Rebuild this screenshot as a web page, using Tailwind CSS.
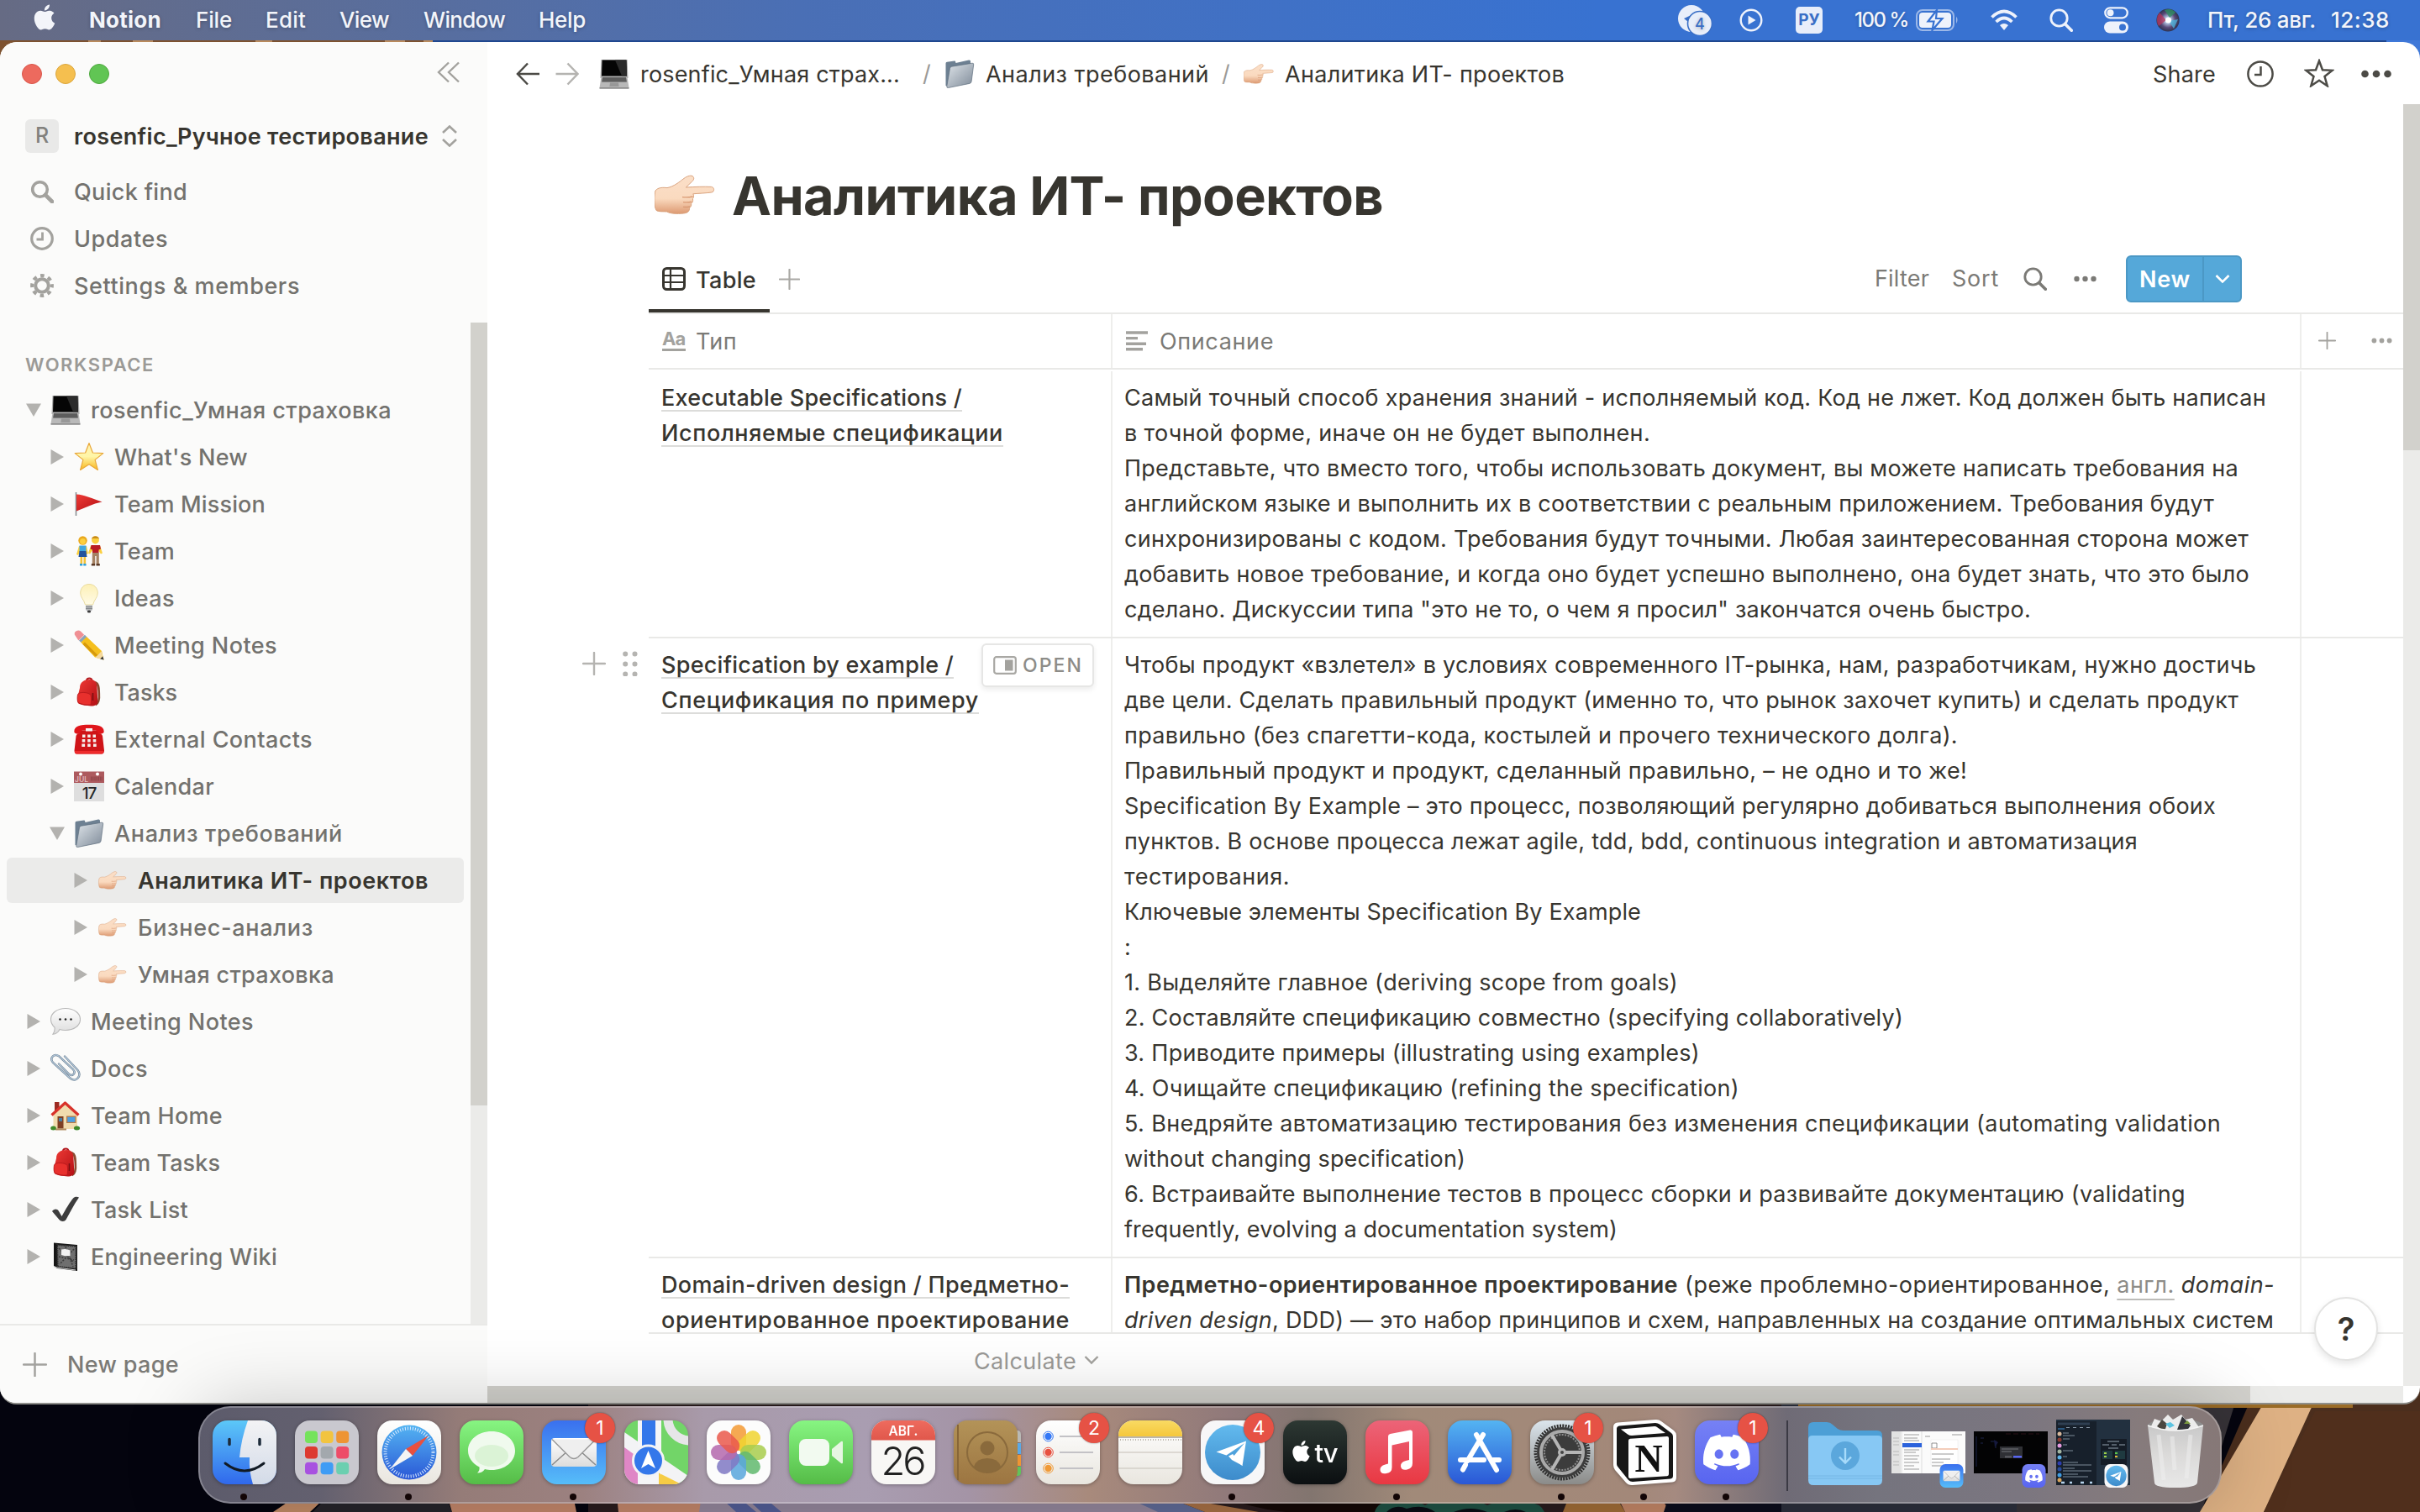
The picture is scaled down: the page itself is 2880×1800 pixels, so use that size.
<!DOCTYPE html>
<html lang="ru">
<head>
<meta charset="utf-8">
<title>Аналитика ИТ- проектов</title>
<script src="https://cdn.jsdelivr.net/npm/@tailwindcss/browser@4"></script>
</head>
<body class="font-['Inter','Noto_Sans',sans-serif] text-[27px] text-[#37352f] antialiased">

<svg width="0" height="0" class="absolute">
  <defs>
    <linearGradient id="g-hand" x1="0" y1="0" x2="0" y2="1"><stop offset="0" stop-color="#fbdfc8"/><stop offset=".6" stop-color="#fadabf"/><stop offset="1" stop-color="#dd9a72"/></linearGradient>
    <linearGradient id="g-star" x1="0" y1="0" x2="0" y2="1"><stop offset="0" stop-color="#fff3b0"/><stop offset=".5" stop-color="#fff6a8"/><stop offset="1" stop-color="#f9b71c"/></linearGradient>
    <linearGradient id="g-fold" x1="0" y1="0" x2="1" y2="1"><stop offset="0" stop-color="#dfe5ea"/><stop offset="1" stop-color="#7e8a98"/></linearGradient>
    <linearGradient id="g-red" x1="0" y1="0" x2="1" y2="1"><stop offset="0" stop-color="#ef3b36"/><stop offset="1" stop-color="#b30f14"/></linearGradient>
    <linearGradient id="g-bulb" x1="0" y1="0" x2="0" y2="1"><stop offset="0" stop-color="#fdf0b6"/><stop offset="1" stop-color="#fffbe6"/></linearGradient>
    <linearGradient id="g-white" x1="0" y1="0" x2="0" y2="1"><stop offset="0" stop-color="#ffffff"/><stop offset="1" stop-color="#dcdcdc"/></linearGradient>
    <linearGradient id="g-finder" x1="0" y1="0" x2="0" y2="1"><stop offset="0" stop-color="#5cc8f8"/><stop offset="1" stop-color="#3068ec"/></linearGradient>
    <linearGradient id="g-face" x1="0" y1="0" x2="0" y2="1"><stop offset="0" stop-color="#f3f3f5"/><stop offset="1" stop-color="#d3dbe8"/></linearGradient>
    <linearGradient id="g-green" x1="0" y1="0" x2="0" y2="1"><stop offset="0" stop-color="#87f582"/><stop offset="1" stop-color="#55bc47"/></linearGradient>
    <linearGradient id="g-mail" x1="0" y1="0" x2="0" y2="1"><stop offset="0" stop-color="#3a70ee"/><stop offset="1" stop-color="#56bdf9"/></linearGradient>
    <linearGradient id="g-blue" x1="0" y1="0" x2="0" y2="1"><stop offset="0" stop-color="#54b4f2"/><stop offset="1" stop-color="#2a57d6"/></linearGradient>
    <linearGradient id="g-tg" x1="0" y1="0" x2="0" y2="1"><stop offset="0" stop-color="#62baee"/><stop offset="1" stop-color="#3d8bcb"/></linearGradient>
    <linearGradient id="g-music" x1="0" y1="0" x2="0" y2="1"><stop offset="0" stop-color="#ec6478"/><stop offset="1" stop-color="#e93842"/></linearGradient>
    <linearGradient id="g-tv" x1="0" y1="0" x2="0" y2="1"><stop offset="0" stop-color="#2d3833"/><stop offset="1" stop-color="#0b0f11"/></linearGradient>
    <linearGradient id="g-set" x1="0" y1="0" x2="0" y2="1"><stop offset="0" stop-color="#dbe5ec"/><stop offset="1" stop-color="#8b8b89"/></linearGradient>
    <linearGradient id="g-disc" x1="0" y1="0" x2="0" y2="1"><stop offset="0" stop-color="#7681f5"/><stop offset="1" stop-color="#5865f0"/></linearGradient>
    <linearGradient id="g-book" x1="0" y1="0" x2="0" y2="1"><stop offset="0" stop-color="#b39358"/><stop offset="1" stop-color="#9c7541"/></linearGradient>
    <linearGradient id="g-note" x1="0" y1="0" x2="0" y2="1"><stop offset="0" stop-color="#f9da63"/><stop offset="1" stop-color="#f5c73b"/></linearGradient>
    <linearGradient id="g-paper" x1="0" y1="0" x2="0" y2="1"><stop offset="0" stop-color="#ffffff"/><stop offset="1" stop-color="#e9e6df"/></linearGradient>
    <linearGradient id="g-cal" x1="0" y1="0" x2="0" y2="1"><stop offset="0" stop-color="#ee6b5e"/><stop offset="1" stop-color="#e0574b"/></linearGradient>
    <linearGradient id="g-can" x1="0" y1="0" x2="0" y2="1"><stop offset="0" stop-color="#c9c9c9"/><stop offset=".5" stop-color="#dcdbda"/><stop offset="1" stop-color="#e8e8e8"/></linearGradient>
    <radialGradient id="g-siri"><stop offset="0" stop-color="#ffffff"/><stop offset=".3" stop-color="#a9b8d8"/><stop offset=".65" stop-color="#5a4a78"/><stop offset="1" stop-color="#2d3350"/></radialGradient>
    <clipPath id="c-app"><rect width="76" height="76" rx="18"/></clipPath>
  </defs>

  <symbol id="laptop" viewBox="0 0 36 36"><path d="M2.500 1h31l1 22h-33z" fill="#a9a9a9"/><path d="M3.600 1.500h28.800L33 20.500H3z" fill="#050505"/><path d="M19 1.500h13.400L33 20.500H27z" fill="#2b2b2b"/><path d="M2.500 21.500h31L35.500 34.500h-35z" fill="#b9b9b9"/><path d="M4 22.200h28l.8 5.300H3.200z" fill="#4a4a4a"/><path d="M4 24h28M3.600 26h28.800" stroke="#8a8a8a" stroke-width=".6"/><path d="M13 28.500h10l.6 4.500H12.400z" fill="#989898"/><path d="M.5 34h35v1.800H.5z" fill="#8c8c8c"/></symbol>
  <symbol id="star" viewBox="0 0 36 36"><path d="M18 1.500l4.400 11.500 12.400.600-9.700 7.800 3.300 12L18 26.700 7.600 33.400l3.300-12L1.200 13.600 13.600 13z" fill="url(#g-star)" stroke="#e9a83a" stroke-width="1.200" stroke-linejoin="round"/></symbol>
  <symbol id="flag" viewBox="0 0 36 36"><path d="M2.500 4v28" stroke="#8a8f94" stroke-width="1.600"/><path d="M3 6.500C12 6.500 22 12 33.500 15.500 22 17.500 13 23 3 26.500z" fill="url(#g-red)"/></symbol>
  <symbol id="couple" viewBox="0 0 36 36"><circle cx="10.500" cy="5.500" r="5.200" fill="#e9a91e"/><circle cx="10.500" cy="6.500" r="3.400" fill="#fbcf3f"/><path d="M6 12h9l2 9-2 1-2-3v-2H8l-3 6-2-1z" fill="#fbcf3f"/><path d="M6.500 11.500h8v7h-8z" fill="#3fa6e0"/><path d="M6.500 18h8l1 7h-10z" fill="#24549c"/><path d="M7.500 25h2.600v8H7.500zM11.500 25h2.600v8h-2.600z" fill="#f5c33a"/><path d="M7 33h3.200v2.500H7zM11.300 33h3.200v2.500h-3.200z" fill="#2ea0dc"/><circle cx="25.500" cy="5" r="4.400" fill="#fbcf3f"/><path d="M21 4c0-5 9-5 9 0l-1-1h-7z" fill="#c98c17"/><path d="M20 11.500h11l3 9-2 1-3-4v2h-7v-2l-3 4-2-1z" fill="#fbcf3f"/><path d="M20.500 11h10.500l1 4.500-2.500 1v4h-7.500v-4l-2.500-1z" fill="#b91c25"/><path d="M21.800 20h8v13.500h-3.200V24h-1.400v9.500h-3.400z" fill="#a58263"/><path d="M20.800 33h4.300v2.500h-4.300zM26.500 33h4.300v2.500h-4.300z" fill="#5c3a26"/></symbol>
  <symbol id="bulb" viewBox="0 0 36 36"><path d="M18 1.500c6.300 0 10.300 4.700 10.300 10.500 0 5.500-4.200 7.500-5.800 14h-9C11.900 19.500 7.700 17.500 7.700 12 7.700 6.200 11.700 1.500 18 1.500z" fill="url(#g-bulb)" stroke="#eadca0" stroke-width="1"/><path d="M14 26.500h8v5.500l-2 1.500h-4l-2-1.500z" fill="#b6b8ba"/><path d="M14 28.500h8M14 30.500h8" stroke="#7e8286" stroke-width=".9"/><ellipse cx="18" cy="34" rx="2.200" ry="1.500" fill="#3c3c3c"/></symbol>
  <symbol id="pencil" viewBox="0 0 36 36"><path d="M.8 5.500Q0 2 4 .8q2-.8 4 .8l4.200 4.200-6.800 6.800z" fill="#f09094"/><path d="M6 12.500l6.800-6.800 2.600 2.600-6.800 6.800z" fill="#8ba3b7"/><path d="M8.300 14.800l6.800-6.800L33 25l2.500 10.500L25 32.500z" fill="#f5bf1d"/><path d="M10.500 17l2.400-2.400 17.600 17.500-5.500-1z" fill="#d79a0c"/><path d="M32.700 25.200l2.800 10.300-10.200-2.800q4-3.500 7.400-7.500z" fill="#f4d9a0"/><path d="M34.300 31.300l1.300 4.300-4.400-1.200z" fill="#3a3a3a"/></symbol>
  <symbol id="bag" viewBox="0 0 36 36"><path d="M25 6c5 2 4.500 8 4.800 13 .5 6 .5 12-4 14" fill="none" stroke="#8b4a30" stroke-width="2.600"/><path d="M15 4.500c0-4 7-4 6.500 0" fill="none" stroke="#b3161b" stroke-width="2"/><path d="M7 13C7 6 12 3 19 3c6 0 8 3 8.500 9l.8 17c0 4-3 5.500-8 5.500-6-.500-10-1-14-2.500-2.500-1-2.300-4-2-8z" fill="url(#g-red)"/><path d="M4.500 21c1-4 13.500-3 15.500.500 1 3 .5 8 0 11.500-6 .500-10-.500-14-2-2.500-1.500-2-7-1.500-10z" fill="#e8302d" stroke="#b3161b" stroke-width=".8"/><path d="M22.500 19v9" stroke="#7c1012" stroke-width="1.600"/></symbol>
  <symbol id="phone" viewBox="0 0 36 36"><path d="M.3 9C.3 2 8 .8 18 .8S35.700 2 35.700 9c0 3.500-9 3.500-9.200 0v-1.500h-17V9c-.2 3.500-9.200 3.500-9.200 0z" fill="#e0161b"/><path d="M9 7.500h18l2 3.500q4 0 5 3l2 17.500q0 4-3 4H3.500q-3 0-3-4L2.500 14q1-3 4.500-3z" fill="#cf1418"/><path d="M14 5h8v3.500h-8z" fill="#f6f6f6"/><path d="M1 32h34v1.500Q35 35.500 33 35.500H3Q1 35.500 1 33.500z" fill="#ee2b2c"/><path d="M10 12.500h3.500v3.500H10zM16.200 12.500h3.500v3.500h-3.500zM22.500 12.500H26v3.500h-3.500zM9.700 18h3.600v3.500H9.700zM16.200 18h3.500v3.500h-3.500zM22.700 18h3.600v3.500h-3.600zM9.300 23.500h3.800V27H9.300zM16.200 23.500h3.500V27h-3.500zM23 23.500h3.700V27H23z" fill="#f5f0ee"/></symbol>
  <symbol id="cal" viewBox="0 0 36 36"><path d="M0 .500h36V14H0z" fill="#ad5a5e"/><path d="M0 14h36v22H0z" fill="#dedede"/><circle cx="8" cy="3.500" r="2" fill="#fff"/><circle cx="28" cy="3.500" r="2" fill="#fff"/><path d="M20 9h14" stroke="#8f4448" stroke-width="5" stroke-dasharray="1 .8"/><text x="1" y="12.500" font-size="8.500" fill="#e7c6c6" font-family="Inter">JUL</text><text x="18" y="32.500" font-size="19" text-anchor="middle" fill="#262626" letter-spacing="-1" font-family="Inter">17</text></symbol>
  <symbol id="folder" viewBox="0 0 36 36"><path d="M1.500 5.500q0-1.500 1.500-1.700l9-1.200q1 0 1.200 1.200l.3 1.200L29 1.500q2-.300 2 1.500v4l-26 26-3.500-1z" fill="#6d8092"/><path d="M6.500 11.500q.2-2 2.200-2.300L33 5.200q2-.200 1.700 1.800l-2.600 20q-.2 2-2.200 2.400L4.500 34.500q-2 .300-1.700-1.800z" fill="url(#g-fold)" stroke="#5f6e7e" stroke-width=".7"/></symbol>
  <symbol id="hand" viewBox="0 0 36 24"><path d="M.5 9.500C2 7.500 5 7.500 7.500 7.800c4-.8 7-3.300 10-5.600 2-1.500 4.500-2.200 5.500-1 .9 1.200 0 2.300-1.500 3.600l-2.800 2.700c5-.3 11-.5 15-.3 2 .1 2.200 3 .2 3.300-3.500.5-8 .6-11 .9.600 1 .5 2-.2 2.900.3 1.200 0 2.200-.9 2.900.2 1.200-.2 2-1 2.500 0 2-1 3-3.500 3.300-4 .4-8 .2-10-1-2-.2-5 .2-6.300-.8C-.5 18.500-.2 12 .5 9.500z" fill="url(#g-hand)" stroke="#d9a27d" stroke-width=".5"/><path d="M16.500 13.300q3 .4 6.300-.3M17 16.300q2.500.400 5-.2M17 19.200q2 .2 4-.2" stroke="#d99a74" stroke-width=".7" fill="none"/></symbol>
  <symbol id="speech" viewBox="0 0 36 36"><path d="M18 2.500c10 0 17.500 5.500 17.500 13S28 28.500 18 28.500c-2.500 0-5-.3-7-1-1.500 3-4 5.500-8 5.700 1.500-2 2.400-4.700 2-8.200C2.200 22.500.5 19.500.5 15.500.5 8 8 2.500 18 2.500z" fill="url(#g-white)" stroke="#b9b9b9" stroke-width="1.100"/><circle cx="11.500" cy="15.500" r="1.300" fill="#222"/><circle cx="18" cy="15.500" r="1.300" fill="#222"/><circle cx="24.500" cy="15.500" r="1.300" fill="#222"/></symbol>
  <symbol id="clip" viewBox="0 0 36 36"><path d="M17 3.500l15.500 16.500c5 6.500-1.500 15-8.500 10L3 11C-1.500 5.500 4.500-.5 10 3.200l17 16c4 4.500-1 9-5 5.500L10 12.500" fill="none" stroke="#6f8496" stroke-width="2.400" stroke-linecap="round"/><path d="M17 3.500l15.500 16.500c5 6.500-1.500 15-8.500 10L3 11C-1.500 5.500 4.500-.5 10 3.200l17 16c4 4.500-1 9-5 5.500L10 12.500" fill="none" stroke="#b5c9db" stroke-width="1.100" stroke-linecap="round"/></symbol>
  <symbol id="house" viewBox="0 0 36 36"><path d="M5 2h5.500v10H5z" fill="#9c2b22"/><path d="M3.500 16L17.500 4.500 32 16v18H3.500z" fill="#f1dcae"/><path d="M1.500 17.500L17.500 3l16 14.500" fill="none" stroke="#d8322a" stroke-width="3.200" stroke-linejoin="round"/><path d="M8.500 19h7v14.500h-7z" fill="#7f4023"/><path d="M10 21h4v4h-4z" fill="#4a7ea3"/><path d="M19 18.500h11.500v8.500H19z" fill="#b97a45"/><path d="M20.300 19.800h9v6h-9z" fill="#4c9fe2"/><path d="M6 33.500h13v2H6z" fill="#b08a5e"/><ellipse cx="3.500" cy="33" rx="3.300" ry="2.500" fill="#3f8a2a"/><ellipse cx="31.500" cy="33" rx="3.600" ry="2.500" fill="#3f8a2a"/></symbol>
  <symbol id="check" viewBox="0 0 36 36"><path d="M2 20c2-3 6-3.500 8 0l3.500 6C18 18 23 9 27.500 4c2-2 5-1.500 6.500-.5C28 12 23 22 18.500 30c-1.500 2.500-6 2.500-8 0z" fill="#3d3d3d"/></symbol>
  <symbol id="wiki" viewBox="0 0 36 36"><path d="M4 1.500L32 4v31L8 32 4 29.500z" fill="#151515"/><path d="M8 4l22.500 1.500v27L8.500 30z" fill="#6f6f6f"/><path d="M8 4l22.500 1.500v27L8.500 30z" fill="none" stroke="#2a2a2a" stroke-width="2.200" stroke-dasharray="1.500 1"/><path d="M10 8l18 17M28 9L11 27M18 6l9 24M10 18l18 4" stroke="#3b3b3b" stroke-width="1.600" stroke-dasharray="2 1.500"/><path d="M13 9.500q6-1.500 10.500 1v6.500q-5 1-10.500-1z" fill="#f3f3f3"/><path d="M4 29.500l4 1.500 22 3" stroke="#ddd" stroke-width="1" fill="none"/></symbol>

  <symbol id="tri" viewBox="0 0 17 18"><path d="M1 0l15.500 9L1 18z" fill="#b3b2af"/></symbol>
  <symbol id="trid" viewBox="0 0 18 17"><path d="M0 1h18L9 16.500z" fill="#b3b2af"/></symbol>
  <symbol id="plus" viewBox="0 0 28 28"><path d="M14 1v26M1 14h26" stroke="currentColor" stroke-width="2.400" stroke-linecap="round"/></symbol>
  <symbol id="dots" viewBox="0 0 28 8"><circle cx="3.600" cy="4" r="3.300" fill="currentColor"/><circle cx="14" cy="4" r="3.300" fill="currentColor"/><circle cx="24.400" cy="4" r="3.300" fill="currentColor"/></symbol>
  <symbol id="mag" viewBox="0 0 28 28"><circle cx="11.500" cy="11.500" r="9.700" fill="none" stroke="currentColor" stroke-width="2.800"/><path d="M18.800 18.800L26.300 26.300" stroke="currentColor" stroke-width="3.600" stroke-linecap="round"/></symbol>
  <symbol id="apple" viewBox="0 0 24 24"><path fill="currentColor" d="M12.152 6.896c-.948 0-2.415-1.078-3.960-1.040-2.040.027-3.910 1.183-4.961 3.014-2.117 3.675-.546 9.103 1.519 12.090 1.013 1.454 2.208 3.090 3.792 3.039 1.520-.065 2.090-.987 3.935-.987 1.831 0 2.350.987 3.960.948 1.637-.026 2.676-1.480 3.676-2.948 1.156-1.688 1.636-3.325 1.662-3.415-.039-.013-3.182-1.221-3.220-4.857-.026-3.040 2.480-4.494 2.597-4.559-1.429-2.090-3.623-2.324-4.390-2.376-2-.156-3.675 1.090-4.610 1.090zM15.530 3.830c.843-1.012 1.400-2.427 1.245-3.830-1.207.052-2.662.805-3.532 1.818-.780.896-1.454 2.338-1.273 3.714 1.338.104 2.715-.688 3.559-1.701"/></symbol>

  <symbol id="a-mail" viewBox="0 0 76 76"><rect width="76" height="76" rx="18" fill="url(#g-mail)"/><rect x="11" y="21" width="54" height="34" rx="4" fill="url(#g-white)"/><path d="M12 53l19-17M64 53L45 36" stroke="#8a8a8a" stroke-width="1.500"/><path d="M12 22.500l21 21q5 4 10 0l21-21" fill="#efefef" stroke="#9a9a9a" stroke-width="1.500"/></symbol>
  <symbol id="a-discord" viewBox="0 0 76 76"><rect width="76" height="76" rx="18" fill="url(#g-disc)"/><path transform="translate(10 10) scale(2.330)" fill="#fff" d="M20.317 4.370a19.791 19.791 0 00-4.885-1.515.074.074 0 00-.079.037c-.211.375-.445.865-.608 1.250-1.845-.276-3.680-.276-5.487 0-.164-.393-.406-.874-.618-1.250a.077.077 0 00-.079-.037 19.736 19.736 0 00-4.885 1.515.070.070 0 00-.032.028C.533 9.046-.319 13.580.099 18.058a.082.082 0 00.031.056c2.053 1.508 4.041 2.423 5.993 3.029a.078.078 0 00.084-.028c.462-.630.873-1.295 1.226-1.994a.076.076 0 00-.042-.106c-.653-.248-1.274-.550-1.872-.892a.077.077 0 01-.008-.128c.126-.094.252-.192.372-.291a.074.074 0 01.078-.011c3.928 1.793 8.180 1.793 12.061 0a.074.074 0 01.079.010c.120.099.246.198.373.292a.077.077 0 01-.007.128 12.299 12.299 0 01-1.873.891.077.077 0 00-.041.107c.360.698.772 1.363 1.225 1.993a.076.076 0 00.084.029c1.961-.607 3.950-1.522 6.002-3.029a.077.077 0 00.031-.055c.500-5.177-.838-9.674-3.549-13.660a.061.061 0 00-.031-.029zM8.020 15.331c-1.183 0-2.157-1.086-2.157-2.419 0-1.333.956-2.419 2.157-2.419 1.211 0 2.176 1.095 2.157 2.419 0 1.333-.956 2.419-2.157 2.419zm7.975 0c-1.183 0-2.157-1.086-2.157-2.419 0-1.333.955-2.419 2.157-2.419 1.211 0 2.176 1.095 2.157 2.419 0 1.333-.946 2.419-2.157 2.419z"/></symbol>
  <symbol id="a-tg" viewBox="0 0 76 76"><rect width="76" height="76" rx="18" fill="#f7f7f8"/><circle cx="38" cy="38" r="33" fill="url(#g-tg)"/><path d="M18.500 37.500L54 24.500l-4.500 29.500-12-9.500L52 27 30.500 41.500z" fill="#fff"/><path d="M33 42.500l5-2.500 12 14-13-7z" fill="#fff"/></symbol>
</svg>

<div class="relative h-[1800px] w-[2880px] overflow-hidden bg-[#05050f]">

  <!-- desktop wallpaper -->
  <svg class="absolute inset-0" width="2880" height="1800" viewBox="0 0 2880 1800">
    <path d="M0 40h515v40H0z" fill="#7d5230"/><path d="M105 40h15v20h-15zM158 40h24v20h-24zM304 40h20v20h-20zM458 40h24v20h-24zM504 40h11v20h-11z" fill="#b98a5c"/>
    <path d="M515 40h2365v60H515z" fill="#1f478f"/><path d="M2840 40h40v60h-40z" fill="#3f78d8"/>
    <path d="M0 1600h700v200H0z" fill="#04040e"/>
    <path d="M700 1600h1500v200H700z" fill="#2a1c1e"/>
    <path d="M325 1800l50-34 30 0-36 34z" fill="#c08a66"/>
    <path d="M372 1800l40-40h110l16 40z" fill="#26242b"/>
    <path d="M538 1800l-12-40h152l8 40z" fill="#c2866a"/>
    <path d="M736 1800l-4-40h100l12 40z" fill="#c2866a"/>
    <path d="M838 1760h520l60 40H832z" fill="#93869b"/>
    <path d="M860 1785h22l18 15h-24zM890 1785h22l18 15h-24z" fill="#525d96"/>
    <path d="M1348 1786h50l36 14h-56z" fill="#5f6a96"/><path d="M1398 1786h20l80 14h-64z" fill="#a66f45"/>
    <path d="M1450 1780h200v20h-120q-40-4-80-20z" fill="#140806"/>
    <path d="M1636 1800q4-14 24-12 20-6 36 4 14-10 34-2 24-8 40 2 20-10 40-2 22-4 28 10z" fill="#1f5244"/><path d="M1650 1800q10-10 24-4 20-6 34 4zM1730 1800q20-8 40 0zM1790 1800q14-6 26 0z" fill="#0a0d14"/>
    <path d="M1860 1800l8-20h54l12 20z" fill="#a06c37"/><path d="M1934 1800l-10-20h50l14 20z" fill="#c28667"/>
    <path d="M1980 1800l10-30h150l-14 30z" fill="#0c0d1c"/>
    <path d="M2120 1670h520l-20 130H2120z" fill="#2c2f3c"/>
    <path d="M2400 1670h260l-40 130H2400z" fill="#373338"/>
    <path d="M2690 1640h190v160H2620z" fill="#4b2e1d"/>
    <path d="M2700 1660h58l-64 140h-76z" fill="#deb184"/>
    <path d="M2140 1670h660v6H2140z" fill="#9b6c27"/>
    <path d="M2755 1680h125v120h-186z" fill="#502f1c"/>
  </svg>

  <!-- menu bar -->
  <div class="relative flex h-12 items-center bg-linear-to-r from-[#666b84] via-[#4a6fb5] via-33% to-[#3872d1] to-66% text-[26px] font-medium text-[#f3f5fa] [text-shadow:0_1px_4px_rgba(0,0,0,.25)]">
    <svg class="ml-[38px] -mt-2 h-[31px] w-[30px] text-[#f3f5fa]"><use href="#apple"/></svg>
    <span class="fit -mt-0.5 ml-[38px] font-bold" data-w="86">Notion</span>
    <span class="fit -mt-0.5 ml-[41px]" data-w="43">File</span>
    <span class="fit -mt-0.5 ml-[40px]" data-w="48">Edit</span>
    <span class="fit -mt-0.5 ml-[40px]" data-w="59">View</span>
    <span class="fit -mt-0.5 ml-[41px]" data-w="97">Window</span>
    <span class="fit -mt-0.5 ml-[40px]" data-w="56">Help</span>
    <div class="ml-auto mr-[36px] flex h-12 items-center">
      <svg width="42" height="36" viewBox="0 0 42 36"><circle cx="17" cy="16" r="16" fill="#e8eefa"/><path d="M8 16l13-6-3 14z" fill="#3a6fc6"/><circle cx="27" cy="22" r="14.500" fill="#e8eefa" stroke="#3a6fc6" stroke-width="1.600"/><text x="27" y="28.500" text-anchor="middle" font-size="18" font-weight="500" fill="#3a6fc6">4</text></svg>
      <svg class="ml-[32px]" width="28" height="28" viewBox="0 0 28 28"><circle cx="14" cy="14" r="12.300" fill="none" stroke="#eef2fb" stroke-width="2.400"/><path d="M10.500 8.500l9 5.500-9 5.500z" fill="#eef2fb"/></svg>
      <span class="ml-[39px] flex h-8 w-8 items-center justify-center rounded-[5px] bg-[#e8eefa] text-[19px] font-bold text-[#3a6fc6] [text-shadow:none]">РУ</span>
      <span class="fit ml-[38px] text-[24px]" data-w="64">100 %</span>
      <svg class="ml-[9px]" width="52" height="26" viewBox="0 0 52 26"><rect x="1" y="1" width="44" height="24" rx="7" fill="none" stroke="#eef2fb" stroke-opacity=".55" stroke-width="2"/><rect x="4" y="4" width="38" height="18" rx="4" fill="#eef2fb"/><path d="M48 8.500q3 4 0 8.500z" fill="#eef2fb" fill-opacity=".55"/><path d="M25 1L14.500 14.500h7L19.500 25l12-14h-7.500z" fill="#eef2fb" stroke="#3872d1" stroke-width="2.200"/></svg>
      <svg class="ml-[36px]" width="34" height="26" viewBox="0 0 34 26"><path d="M2.500 9.500q14.500-14 29 0M7.600 15q9.400-9 18.800 0" fill="none" stroke="#eef2fb" stroke-width="3.700"/><path d="M12 19q5-4 10 0l-5 6z" fill="#eef2fb"/></svg>
      <svg class="ml-[37px] h-[28px] w-[28px] text-[#eef2fb]"><use href="#mag"/></svg>
      <svg class="ml-[37px]" width="30" height="32" viewBox="0 0 30 32"><rect x="1.300" y="1.300" width="26.500" height="12" rx="6" fill="none" stroke="#eef2fb" stroke-width="2.300"/><circle cx="7.500" cy="7.300" r="4" fill="#eef2fb"/><rect y="17.500" width="29" height="14" rx="7" fill="#eef2fb"/><circle cx="22" cy="24.500" r="4" fill="#3872d1"/></svg>
      <svg class="ml-[32px]" width="28" height="30" viewBox="0 0 28 30"><circle cx="14" cy="15" r="13.600" fill="url(#g-siri)"/><path d="M3 22A13.500 13.500 0 014 6l8 9z" fill="#b5375c" fill-opacity=".75"/><path d="M10 3q8-3 13 3l-7 6z" fill="#2f8f63" fill-opacity=".8"/><path d="M15 16l11-2-5 11z" fill="#4cb0d8" fill-opacity=".8"/><circle cx="14.500" cy="15" r="3.500" fill="#fff"/></svg>
      <span class="fit -mt-0.5 ml-[33px]" data-w="129">Пт, 26 авг.</span>
      <span class="fit -mt-0.5 ml-[18px]" data-w="70">12:38</span>
    </div>
  </div>

  <!-- application window -->
  <div class="relative mt-0.5 flex h-[1622px] overflow-hidden rounded-[20px] border-b-2 border-[#8e8e8a] bg-white">

    <aside class="flex w-[580px] shrink-0 flex-col bg-[#fbfbfa] font-medium text-[#73726e]">
      <div class="flex h-[76px] items-center gap-4 pl-[26px] pr-[32px]">
        <span class="h-6 w-6 rounded-full border border-[#d9564b] bg-[#ed6a5e]"></span>
        <span class="h-6 w-6 rounded-full border border-[#dba63b] bg-[#f5bf4f]"></span>
        <span class="h-6 w-6 rounded-full border border-[#4fa93f] bg-[#61c554]"></span>
        <svg class="-mt-1 ml-auto" width="28" height="26" viewBox="0 0 28 26"><path d="M14 1.500L2 13l12 11.500M26 1.500L14 13l12 11.500" fill="none" stroke="#a3a29e" stroke-width="2.400"/></svg>
      </div>
      <div class="mt-2 flex h-14 items-center pl-[30px]">
        <span class="flex h-10 w-10 shrink-0 items-center justify-center rounded-md bg-[#e9e9e8] text-[25px] text-[#82817d]">R</span>
        <span class="fit ml-[18px] mt-0.5 font-semibold text-[#37352f]" data-w="422">rosenfic_Ручное тестирование</span>
        <svg class="ml-[15px] shrink-0" width="20" height="26" viewBox="0 0 20 26"><path d="M2 9l8-7.500L18 9M2 17l8 7.500L18 17" fill="none" stroke="#a3a29e" stroke-width="2.600"/></svg>
      </div>
      <div class="mt-2.5 flex h-14 items-center pl-[36px] text-[#a3a29e]">
        <svg class="h-7 w-7" viewBox="0 0 28 28"><circle cx="11.500" cy="11.500" r="8.800" fill="none" stroke="currentColor" stroke-width="3.600"/><path d="M18 18L26 26" stroke="currentColor" stroke-width="4.600" stroke-linecap="round"/></svg>
        <span class="fit ml-6 mt-0.5 text-[#73726e]" data-w="135">Quick find</span>
      </div>
      <div class="flex h-14 items-center pl-[36px] text-[#a3a29e]">
        <svg class="h-7 w-7" viewBox="0 0 28 28"><circle cx="14" cy="14" r="12.300" fill="none" stroke="currentColor" stroke-width="3.200"/><path d="M14.500 6.500V15H7.500" fill="none" stroke="currentColor" stroke-width="2.800"/></svg>
        <span class="fit ml-6 mt-0.5 text-[#73726e]" data-w="112">Updates</span>
      </div>
      <div class="flex h-14 items-center pl-[36px] text-[#a3a29e]">
        <svg class="h-7 w-7" viewBox="0 0 28 28"><circle cx="14" cy="14" r="7.800" fill="none" stroke="currentColor" stroke-width="4"/><circle cx="14" cy="14" r="11.800" fill="none" stroke="currentColor" stroke-width="4.200" stroke-dasharray="4.600 4.667" stroke-dashoffset="2.300"/></svg>
        <span class="fit ml-6 mt-0.5 text-[#73726e]" data-w="269">Settings &amp; members</span>
      </div>

      <div class="mt-4 flex h-[1192px] overflow-hidden">
        <div class="w-[560px]">
          <div class="mt-6 flex h-[52px] items-center pl-[30px] text-[22px] font-semibold text-[#9b9a97]"><span class="fit" data-w="154">WORKSPACE</span></div>
          <div id="tree"></div>
          <div class="mt-[34px] flex h-[52px] items-center pl-[30px] text-[22px] font-semibold text-[#9b9a97]"><span class="fit" data-w="102">PRIVATE</span></div>
        </div>
        <div class="w-5 bg-[#ebebe9]"><div class="h-[932px] bg-[#d2d1cc]"></div></div>
      </div>
      <div class="flex h-[94px] items-center border-t-2 border-[#e9e9e7] pl-[27px]">
        <svg class="h-[29px] w-[29px] text-[#a3a29e]"><use href="#plus"/></svg>
        <span class="fit ml-[24px] mt-0.5 text-[#7b7a76]" data-w="133">New page</span>
      </div>
    </aside>

    <main class="flex w-[2300px] flex-col">
      <div class="flex h-[74px] items-center pl-[34px] pt-0.5">
        <svg width="28" height="28" viewBox="0 0 28 28"><path d="M14 1.500L2 14l12 12.500M2 14h26" fill="none" stroke="#4c4b46" stroke-width="2.500"/></svg>
        <svg class="ml-[19px]" width="29" height="28" viewBox="0 0 28 28"><path d="M14 1.500L26 14 14 26.500M26 14H0" fill="none" stroke="#b5b4b1" stroke-width="2.500"/></svg>
        <svg class="ml-[23px] h-9 w-9"><use href="#laptop"/></svg>
        <span class="fit ml-[13px] mt-0.5" data-w="309">rosenfic_Умная страх...</span>
        <span class="ml-[27px] w-[10px] text-[#9b9a97]">/</span>
        <svg class="ml-[16px] h-9 w-9"><use href="#folder"/></svg>
        <span class="fit ml-[13px] mt-0.5" data-w="266">Анализ требований</span>
        <span class="ml-[15px] w-[10px] text-[#9b9a97]">/</span>
        <svg class="ml-[16px] h-6 w-9"><use href="#hand"/></svg>
        <span class="fit ml-[13px] mt-0.5" data-w="333">Аналитика ИТ- проектов</span>
        <span class="fit ml-auto mt-0.5" data-w="75">Share</span>
        <svg class="ml-[37px]" width="32" height="32" viewBox="0 0 32 32"><circle cx="16" cy="16" r="14.600" fill="none" stroke="#4c4b46" stroke-width="2.500"/><path d="M16.500 7v10H9" fill="none" stroke="#4c4b46" stroke-width="2.500"/></svg>
        <svg class="ml-[36px] -mt-0.5" width="36" height="34" viewBox="0 0 36 34"><path d="M18 2.500l4 10.800 11.700.5-9.200 7.200 3.200 11.200L18 25.700l-9.700 6.500 3.200-11.200L2.300 13.800l11.700-.5z" fill="none" stroke="#4c4b46" stroke-width="2.500"/></svg>
        <svg class="ml-[32px] mr-[34px]" width="36" height="10" viewBox="0 0 36 10"><circle cx="4.500" cy="5" r="4.300" fill="#4c4b46"/><circle cx="18" cy="5" r="4.300" fill="#4c4b46"/><circle cx="31.500" cy="5" r="4.300" fill="#4c4b46"/></svg>
      </div>

      <div class="flex h-[1526px]">
        <div class="flex w-[2280px] flex-col">
          <div class="mt-[69px] flex h-20 shrink-0 items-center pl-[199px]">
            <svg class="-mt-0.5 h-[48px] w-[72px] shrink-0"><use href="#hand"/></svg>
            <h1 class="fit ml-[20px] text-[63px] font-bold" data-w="775">Аналитика ИТ- проектов</h1>
          </div>

          <div class="ml-[192px] mt-[31px] flex h-[70px] shrink-0 items-start border-b-2 border-[#e9e9e7]">
            <div class="flex h-[68px] items-start border-b-4 border-[#37352f] pl-4 pr-4">
              <div class="flex h-14 items-center">
                <svg width="28" height="28" viewBox="0 0 28 28"><rect x="1.500" y="1.500" width="25" height="25" rx="4" fill="none" stroke="#37352f" stroke-width="3"/><path d="M1 10h26M1 18h26M10 1v26" stroke="#37352f" stroke-width="2.200"/></svg>
                <span class="fit ml-3 mt-1 font-medium" data-w="72">Table</span>
              </div>
            </div>
            <svg class="ml-[11px] mt-[16px] h-[25px] w-[25px] text-[#a9a8a4]"><use href="#plus"/></svg>
            <div class="ml-auto flex h-14 items-center text-[#7b7a76]">
              <span class="fit" data-w="65">Filter</span>
              <span class="fit ml-[27px]" data-w="56">Sort</span>
              <svg class="ml-[29px] h-7 w-7"><use href="#mag"/></svg>
              <svg class="ml-[32px] h-[8px] w-[27px]"><use href="#dots"/></svg>
              <div class="ml-[35px] mr-[192px] flex h-14 w-[138px] overflow-hidden rounded-md border-2 border-[#4b98c5] bg-[#55a8d9] text-white">
                <div class="flex w-[91px] shrink-0 items-center border-r-2 border-[#4b98c5] pl-3.5 pt-0.5"><span class="fit font-semibold" data-w="61">New</span></div>
                <div class="flex flex-1 items-center justify-center"><svg width="18" height="12" viewBox="0 0 18 12"><path d="M1.500 2L9 9.500 16.500 2" fill="none" stroke="#fff" stroke-width="2.500"/></svg></div>
              </div>
            </div>
          </div>

          <div class="ml-[192px] flex h-[66px] shrink-0 items-stretch border-b-2 border-[#e9e9e7] text-[#7b7a76]">
            <div class="flex w-[552px] items-center border-r-2 border-[#eeeeec] pl-4">
              <span class="h-[24px] w-[28px] border-b-[3px] border-[#a3a29e] text-[22px] font-bold leading-[18px] tracking-[-1px] text-[#a3a29e]">Aa</span>
              <span class="fit ml-3 mt-0.5" data-w="49">Тип</span>
            </div>
            <div class="flex w-[1415px] items-center border-r-2 border-[#eeeeec] pl-4">
              <svg width="26" height="24" viewBox="0 0 26 24"><path d="M0 2h26M0 8.600h14M0 15.200h24M0 21.800h20" stroke="#a3a29e" stroke-width="3.400"/></svg>
              <span class="fit ml-[14px] mt-0.5" data-w="136">Описание</span>
            </div>
            <svg class="ml-[20px] mt-[21px] h-[21px] w-[21px] text-[#a3a29e]"><use href="#plus"/></svg>
            <svg class="ml-[42px] mt-[28px] h-[7px] w-[25px] text-[#a3a29e]"><use href="#dots"/></svg>
          </div>

          <div id="rows" class="mt-0.5 h-[1144px] shrink-0 overflow-hidden leading-[42px]"></div>

          <div class="ml-[192px] flex h-[64px] shrink-0 items-center border-t-2 border-[#e9e9e7] pl-[387px] text-[#9b9a97]">
            <span class="fit mt-1" data-w="122">Calculate</span>
            <svg class="ml-[9px]" width="18" height="12" viewBox="0 0 18 12"><path d="M1.500 2L9 9.500 16.500 2" fill="none" stroke="#a3a29e" stroke-width="2.400"/></svg>
          </div>
        </div>
        <div class="w-5 bg-[#ebebe9]"><div class="h-[412px] bg-[#d2d1cc]"></div></div>
      </div>
      <div class="flex h-5"><div class="w-[2098px] bg-[#d2d1cc]"></div><div class="w-[182px] bg-[#ebebe9]"></div></div>
    </main>

    <div class="absolute right-[50px] top-[1494px] flex h-[76px] w-[76px] items-center justify-center rounded-full border-2 border-[#e3e3e2] bg-white pt-px text-[38px] font-semibold shadow-[0_4px_8px_rgba(0,0,0,.1)]">?</div>
  </div>

  <!-- dock -->
  <div class="relative mx-auto mt-0.5 flex h-[116px] w-[2408px] items-start rounded-[38px] border-2 border-white/25 bg-[linear-gradient(90deg,#5c5b6b_0%,#63606f_6%,#957c78_13%,#9c8180_19%,#a89aaa_25%,#a99db1_33%,#a494a6_38%,#a88a7c_44%,#90797a_51%,#82756f_55%,#a18a79_60%,#a38879_71%,#a58a80_73%,#6f6b76_78.500%,#75747e_83%,#7b7680_90%,#867b7c_96%,#867877_100%)] bg-origin-border pl-[15px] pt-[15px] shadow-[0_0_90px_rgba(0,0,0,.22)]">
    <div id="dock" class="flex gap-[22px]"></div>
    <div class="ml-[33px] h-[84px] w-[2px] bg-[#3b3a44]"></div>
    <svg class="ml-[24px] mt-[2px]" width="88" height="76" viewBox="0 0 88 76"><path d="M0 6q0-6 6-6h16q4 0 7 3l6 5q3 2 7 2h40q6 0 6 6v20H0z" fill="#4d9fd6"/><path d="M0 21q0-5 5-5h78q5 0 5 5v48q0 6-6 6H6q-6 0-6-6z" fill="#87c8f4"/><path d="M0 64h88M0 67h88" stroke="#74b6e4" stroke-width="1"/><circle cx="44" cy="40" r="17" fill="#5ba7dc"/><path d="M44 31v17M37 41.500l7 7 7-7" fill="none" stroke="#a7dbfb" stroke-width="2.400"/></svg>
    <div class="relative ml-[11px] mt-[13px] h-[50px] w-[88px]">
      <svg width="88" height="50" viewBox="0 0 88 50"><path d="M0 0h88v50H0z" fill="#fbfbfb"/><path d="M0 0h11v50H0z" fill="#e2e2e2"/><path d="M2 8h7M2 12h7M2 16h7M2 24h7M2 28h7M2 36h7M2 40h7" stroke="#b9b9b9"/><path d="M12 0v50M36 0v50" stroke="#ddd"/><path d="M13 14h23v5H13z" fill="#2b62dc"/><path d="M15 4h18M15 8h16M15 11h18M15 22h18M15 25h14M15 29h18M15 33h16M15 37h18M15 41h12M15 45h18" stroke="#bdbdbd" stroke-width="1.300"/><path d="M40 6h6M72 4h12" stroke="#999"/><path d="M47 10h32v30H47z" fill="#fff" stroke="#e6e6e6" stroke-width=".5"/><path d="M48 14h6v6h-6z" fill="none" stroke="#777" stroke-width=".8"/><path d="M47 20h32v2H47z" fill="#f4cdbb"/><path d="M48 27h26M48 33h22M48 37h14M48 41h18" stroke="#999" stroke-width="1.200"/></svg>
      <svg class="absolute left-[57px] top-[39px] h-[28px] w-[29px]"><use href="#a-mail"/></svg>
    </div>
    <div class="relative ml-[10px] mt-[13px] h-[50px] w-[88px]">
      <svg width="88" height="50" viewBox="0 0 88 50"><path d="M0 0h88v50H0z" fill="#030304"/><path d="M3 6v36M8 8h4M8 14h3M20 12h7M26 12v8" stroke="#151a33" stroke-width="1.500"/><path d="M24 10l5 3-4 6z" fill="#15193d"/><path d="M38 3h40" stroke="#2a1016" stroke-dasharray="6 3"/><path d="M31 18h27v14H31z" fill="#2f3035"/><path d="M33 21h20M33 24h12" stroke="#77787e"/><path d="M37 29h8v2.500h-8z" fill="#55565c"/><path d="M47 29h10v2.500H47z" fill="#5865f0"/></svg>
      <svg class="absolute left-[57px] top-[39px] h-[28px] w-[29px]"><use href="#a-discord"/></svg>
    </div>
    <div class="relative ml-[10px] -mt-px h-[78px] w-[88px]">
      <svg width="88" height="78" viewBox="0 0 88 78"><path d="M0 0h88v78H0z" fill="#22303f"/><path d="M0 2h48v76H0z" fill="#17202b"/><path d="M2 5h38" stroke="#2f3f52" stroke-width="3"/><path d="M2 11h8" stroke="#3f8fd8"/><path d="M12 9.500h30" stroke="#8998a8" stroke-dasharray="4 4"/><circle cx="4" cy="17" r="2.500" fill="#d8b79a"/><circle cx="4" cy="24" r="2.500" fill="#8b3b30"/><circle cx="4" cy="31" r="2.500" fill="#e79be0"/><circle cx="4" cy="38" r="2.500" fill="#a3b5a0"/><circle cx="4" cy="45" r="2.500" fill="#5cb1e8"/><circle cx="4" cy="52" r="2.500" fill="#2c3db0"/><circle cx="4" cy="59" r="2.500" fill="#274b9c"/><circle cx="4" cy="66" r="2.500" fill="#3f9de4"/><circle cx="4" cy="72" r="2.500" fill="#d7a35a"/><path d="M8 16h7M8 19h14M8 23h8M8 30h5M8 37h12M8 44h5M8 51h18M8 54h34M8 58h14M8 61h34M8 65h18M8 68h30" stroke="#7d8a98" stroke-width="1.100"/><path d="M6 75h4M16 75h3M29 75h4M40 75h3" stroke="#b5d3ec" stroke-width="2.500"/><path d="M53 23h31v31H53z" fill="#151c26"/><path d="M61 26h14M55 30h8M66 30h6M75 30h7M62 34h12" stroke="#94a1ae"/><path d="M55 37h12v10H55zM70 37h12v10H70z" fill="#1f3a40"/><path d="M57 40h3M57 44h3" stroke="#9fd24a" stroke-width="2"/><path d="M70 40h3" stroke="#5cc84a" stroke-width="2"/><path d="M70 44h3" stroke="#e9b93a" stroke-width="2"/></svg>
      <svg class="absolute left-[57px] top-[53px] h-[28px] w-[29px]"><use href="#a-tg"/></svg>
    </div>
    <svg class="ml-[20px] -mt-[7px]" width="68" height="88" viewBox="0 0 68 88"><ellipse cx="34" cy="13" rx="33" ry="8" fill="#8d8d8d"/><path d="M5 14L9 5l8 3 8-8 6 6 10-6 5 6 8-2 8 11-6 8H12z" fill="#ececec"/><path d="M12 14l6-8 6 5-3 9z" fill="#4a4640"/><path d="M36 18l6-16 10 11-5 7z" fill="#35363a"/><path d="M22 11l6-2 5 4-6 3z" fill="#5cc3e0"/><path d="M44 11l4-4 4 4z" fill="#7c9c3c"/><path d="M1 13q33 12 66 0l-7 68q-1 6-26 6T9 81z" fill="url(#g-can)"/><path d="M14 24l6 54M52 24l-5 52M30 26l3 40" stroke="#f0f0f0" stroke-width="5" stroke-opacity=".5"/><path d="M1 13q33 12 66 0" fill="none" stroke="#f4f4f4" stroke-width="1.500"/></svg>
  </div>
</div>

<script>
  // ---- sidebar tree: [level, icon, label, label width, state] ----
  const pages = [
    [0, 'laptop', 'rosenfic_Умная страховка', 358, 'open'],
    [1, 'star', "What's New", 159], [1, 'flag', 'Team Mission', 180], [1, 'couple', 'Team', 72],
    [1, 'bulb', 'Ideas', 72], [1, 'pencil', 'Meeting Notes', 194], [1, 'bag', 'Tasks', 75],
    [1, 'phone', 'External Contacts', 236], [1, 'cal', 'Calendar', 119],
    [1, 'folder', 'Анализ требований', 272, 'open'],
    [2, 'hand', 'Аналитика ИТ- проектов', 346, 'active'], [2, 'hand', 'Бизнес-анализ', 209], [2, 'hand', 'Умная страховка', 234],
    [0, 'speech', 'Meeting Notes', 194], [0, 'clip', 'Docs', 68], [0, 'house', 'Team Home', 157],
    [0, 'bag', 'Team Tasks', 154], [0, 'check', 'Task List', 116], [0, 'wiki', 'Engineering Wiki', 222],
  ];
  const indent = ['pl-[23px]', 'pl-[51px]', 'pl-[79px]'];
  document.getElementById('tree').innerHTML = pages.map(([lv, icon, label, w, st]) => `
    <div class="flex h-14 items-center px-2">
      <div class="flex h-[54px] w-[544px] items-center rounded-md ${indent[lv]} ${st === 'active' ? 'bg-[#ebebea] font-semibold text-[#37352f]' : ''}">
        <svg class="h-[18px] w-[18px] shrink-0"><use href="#${st === 'open' ? 'trid' : 'tri'}"/></svg>
        <svg class="ml-[11px] w-9 shrink-0 ${icon === 'hand' ? 'h-[22px]' : 'h-9'}"><use href="#${icon}"/></svg>
        <span class="fit ml-[12px] mt-0.5" data-w="${w}">${label}</span>
      </div>
    </div>`).join('');

  // ---- table: each cell is a list of [text, width] lines ----
  const table = [
    { title: [['Executable Specifications /', 358], ['Исполняемые спецификации', 407]],
      text: [
        ['Самый точный способ хранения знаний - исполняемый код. Код не лжет. Код должен быть написан', 1359],
        ['в точной форме, иначе он не будет выполнен.', 626],
        ['Представьте, что вместо того, чтобы использовать документ, вы можете написать требования на', 1326],
        ['английском языке и выполнить их в соответствии с реальным приложением. Требования будут', 1297],
        ['синхронизированы с кодом. Требования будут точными. Любая заинтересованная сторона может', 1338],
        ['добавить новое требование, и когда оно будет успешно выполнено, она будет знать, что это было', 1339],
        ['сделано. Дискуссии типа "это не то, о чем я просил" закончатся очень быстро.', 1079]] },
    { hover: true, title: [['Specification by example /', 348], ['Спецификация по примеру', 378]],
      text: [
        ['Чтобы продукт «взлетел» в условиях современного IT-рынка, нам, разработчикам, нужно достичь', 1347],
        ['две цели. Сделать правильный продукт (именно то, что рынок захочет купить) и сделать продукт', 1326],
        ['правильно (без спагетти-кода, костылей и прочего технического долга).', 992],
        ['Правильный продукт и продукт, сделанный правильно, – не одно и то же!', 1003],
        ['Specification By Example – это процесс, позволяющий регулярно добиваться выполнения обоих', 1299],
        ['пунктов. В основе процесса лежат agile, tdd, bdd, continuous integration и автоматизация', 1206],
        ['тестирования.', 197],
        ['Ключевые элементы Specification By Example', 615],
        [':', 8],
        ['1. Выделяйте главное (deriving scope from goals)', 659],
        ['2. Составляйте спецификацию совместно (specifying collaboratively)', 927],
        ['3. Приводите примеры (illustrating using examples)', 685],
        ['4. Очищайте спецификацию (refining the specification)', 732],
        ['5. Внедряйте автоматизацию тестирования без изменения спецификации (automating validation', 1305],
        ['without changing specification)', 406],
        ['6. Встраивайте выполнение тестов в процесс сборки и развивайте документацию (validating', 1263],
        ['frequently, evolving a documentation system)', 587]] },
    { title: [['Domain-driven design / Предметно-', 486], ['ориентированное проектирование', 486]],
      text: [
        ['<b class="font-semibold">Предметно-ориентированное проектирование</b> (реже проблемно-ориентированное, <span class="text-[#8d8c88] underline decoration-[#bdbcb9] decoration-2 underline-offset-[7px]">англ.</span> <i>domain-</i>', 1369],
        ['<i>driven design</i>, DDD) — это набор принципов и схем, направленных на создание оптимальных систем', 1368]] },
  ];
  const lines = (cell, cls) => cell.map(([t, w]) => `<div class="h-[42px]"><span class="fit ${cls}" data-w="${w}">${t}</span></div>`).join('');
  const handle = `
    <div class="flex w-[192px] items-start pl-[113px] pt-[14px] text-[#b5b4b1]">
      <svg class="mt-[2px] h-7 w-7"><use href="#plus"/></svg>
      <svg class="ml-[20px] mt-px" width="18" height="30" viewBox="0 0 18 30" fill="#b5b4b1"><circle cx="3.200" cy="3.500" r="3"/><circle cx="14.500" cy="3.500" r="3"/><circle cx="3.200" cy="15.500" r="3"/><circle cx="14.500" cy="15.500" r="3"/><circle cx="3.200" cy="27.500" r="3"/><circle cx="14.500" cy="27.500" r="3"/></svg>
    </div>`;
  const openBtn = `
    <div class="absolute right-[20px] top-[6px] flex h-[52px] w-[134px] items-center rounded-md border-2 border-[#e6e6e5] bg-white pl-3 shadow-[0_3px_6px_rgba(0,0,0,.08)]">
      <svg class="shrink-0" width="28" height="22" viewBox="0 0 28 22"><rect x="1.200" y="1.200" width="25.600" height="19.600" rx="2.500" fill="none" stroke="#a9a8a4" stroke-width="2.200"/><path d="M14 4.500h9.500v13H14z" fill="#a3a29e"/></svg>
      <span class="fit ml-[7px] text-[23px] font-medium text-[#8d8c88]" data-w="72">OPEN</span>
    </div>`;
  document.getElementById('rows').innerHTML = table.map(r => `
    <div class="flex">
      ${r.hover ? handle : '<div class="w-[192px]"></div>'}
      <div class="flex w-[2088px] border-b-2 border-[#e9e9e7]">
        <div class="relative w-[552px] border-r-2 border-[#eeeeec] pb-[11px] pl-[15px] pt-[11px] font-medium">${lines(r.title, 'underline decoration-2 decoration-[#dcdcda] underline-offset-[5px] [text-decoration-skip-ink:none]')}${r.hover ? openBtn : ''}</div>
        <div class="w-[1415px] border-r-2 border-[#eeeeec] pb-[11px] pl-[14px] pt-[11px]">${lines(r.text, 'font-normal')}</div>
      </div>
    </div>`).join('');

  // ---- dock icons on a 76 × 76 grid ----
  const hues = ['#f39b35', '#f0d431', '#a9cd4e', '#62b96f', '#5aa6dc', '#8079c4', '#b569ad', '#ea5a4d'];
  const apps = [
    { run: 1, svg: '<g clip-path="url(#c-app)"><path d="M0 0h76v76H0z" fill="url(#g-finder)"/><path d="M42 0Q34 22 32 44h12q-1 16 4 32h28V0z" fill="url(#g-face)"/></g><path d="M20 22.500v6M56 22.500v6" stroke="#1d2b3a" stroke-width="3.500" stroke-linecap="round"/><path d="M15 51q23 18 46 0" fill="none" stroke="#111a24" stroke-width="3" stroke-linecap="round"/>' },
    { svg: '<rect width="76" height="76" rx="18" fill="#c9c8cf"/>' + [['#75e35c', '#f2c43f', '#ee9433'], ['#dd3a30', '#a3a8ad', '#ee4c68'], ['#a851e0', '#3f9cf5', '#6bcfb0']].map((r, y) => r.map((c, x) => `<rect x="${12 + x * 18.600}" y="${12.500 + y * 18.600}" width="15" height="14.500" rx="4" fill="${c}"/>`).join('')).join('') },
    { run: 1, svg: '<rect width="76" height="76" rx="18" fill="url(#g-paper)"/><circle cx="38" cy="38" r="32.500" fill="url(#g-blue)"/><circle cx="38" cy="38" r="28.500" fill="none" stroke="#dcecff" stroke-width="4" stroke-dasharray="1 2"/><path d="M61 18L34 34l8 8z" fill="#e8503f"/><path d="M15 58l19-24 8 8z" fill="#f4f4f4"/>' },
    { svg: '<rect width="76" height="76" rx="18" fill="url(#g-green)"/><path d="M38 13c16 0 28 10 28 23S54 59 38 59c-3 0-5-.3-8-1-2 3-5 4.500-9 4.500 2-2 3-4 2.500-7C15 51 10 44 10 36c0-13 12-23 28-23z" fill="#f0faee"/><ellipse cx="38" cy="42" rx="20" ry="13" fill="#cdeec6" fill-opacity=".6"/>' },
    { run: 1, badge: 1, svg: '<use href="#a-mail"/>' },
    { svg: '<g clip-path="url(#c-app)"><path d="M0 0h76v76H0z" fill="#72d568"/><path d="M0 14L76 66v10H0z" fill="#f3f3f5"/><path d="M0 32l22 16v28H0z" fill="#df87c6"/><path d="M40 76V62l28 14z" fill="#f6cc45"/><path d="M16 0h28v76H16z" fill="#f5f5f7"/><path d="M21 0h16v40H21z" fill="#3477ea"/><path d="M41 62l16 14H41z" fill="#f6cc45"/><path d="M52-2a26 26 0 0026 26" fill="none" stroke="#e6e6e8" stroke-width="11"/></g><circle cx="28.500" cy="48" r="18" fill="#3477ea" stroke="#f3f3f5" stroke-width="3"/><path d="M28.500 36L37 57l-8.500-5-8.500 5z" fill="#fff"/>' },
    { svg: '<rect width="76" height="76" rx="18" fill="#fcfcfc"/>' + hues.map((c, i) => `<rect x="29" y="5" width="18" height="31" rx="9" fill="${c}" fill-opacity=".86" transform="rotate(${i * 45} 38 38)"/>`).join('') + '<circle cx="38" cy="38" r="2" fill="#fff"/>' },
    { svg: '<rect width="76" height="76" rx="18" fill="url(#g-green)"/><rect x="12" y="22" width="36" height="32" rx="8" fill="#f2faf0"/><path d="M51 34l11-9q2-1 2 1v24q0 2-2 1l-11-9z" fill="#e6f6e2"/>' },
    { svg: '<g clip-path="url(#c-app)"><path d="M0 0h76v76H0z" fill="#f8f7f5"/><path d="M0 0h76v23.500H0z" fill="url(#g-cal)"/></g><text x="38" y="18" text-anchor="middle" font-size="15.500" font-weight="600" fill="#fff">АВГ.</text><text x="37" y="65" text-anchor="middle" font-size="47" font-weight="300" fill="#222" letter-spacing="-3">26</text>' },
    { svg: '<path d="M72 12h4q4 0 4 5v9h-8z" fill="#b9b9b5"/><path d="M72 27h8v13h-8z" fill="#5aa9e6"/><path d="M72 41h8v13h-8z" fill="#ef9433"/><path d="M72 55h8v7q0 4-4 4h-4z" fill="#62c25a"/><rect width="76" height="76" rx="16" fill="url(#g-book)"/><path d="M5 5v66" stroke="#876638" stroke-width="2"/><circle cx="40" cy="38" r="24" fill="none" stroke="#8a6a3c" stroke-width="2"/><circle cx="40" cy="33" r="8.500" fill="#8a6a3c"/><path d="M24 55q3-10 16-10t16 10q-7 7-16 7t-16-7z" fill="#8a6a3c"/>' },
    { badge: 2, svg: '<rect width="76" height="76" rx="18" fill="url(#g-paper)"/>' + ['#3478f6', '#e8503f', '#f09a37'].map((c, i) => `<circle cx="14.500" cy="${19 + i * 19}" r="4.200" fill="${c}"/><circle cx="14.500" cy="${19 + i * 19}" r="5.800" fill="none" stroke="${c}" stroke-width="1"/><path d="M28 ${19 + i * 19}h40" stroke="#c3c2c6" stroke-width="1.800"/>`).join('') },
    { svg: '<g clip-path="url(#c-app)"><path d="M0 0h76v76H0z" fill="url(#g-paper)"/><path d="M0 0h76v19H0z" fill="url(#g-note)"/><path d="M0 20h76" stroke="#bcb7ab" stroke-width="2"/><path d="M2 23h74" stroke="#bdb8ac" stroke-width="2" stroke-dasharray="1 2"/><path d="M0 38h76M0 57h76" stroke="#d3d0c9" stroke-width="1.500"/></g>' },
    { run: 1, badge: 4, svg: '<use href="#a-tg"/>' },
    { svg: '<rect width="76" height="76" rx="18" fill="url(#g-tv)"/><svg x="9" y="22" width="25" height="29" viewBox="0 0 24 24" color="#fff"><use href="#apple"/></svg><text x="51" y="50" text-anchor="middle" font-size="31" font-weight="500" fill="#fff" letter-spacing="-1">tv</text>' },
    { run: 1, svg: '<rect width="76" height="76" rx="18" fill="url(#g-music)"/><path d="M27 19q0-2.500 2.500-3L53 11.500q3-.5 3 2.500v37q0 6-6.500 7.500-7 1.200-7.500-4-.3-5 6-6.500l4-1V25l-20.500 4.500V56q0 6-6.500 7-7 1.200-7.500-4-.3-5 6-6.500l3.500-1z" fill="#fff"/>' },
    { svg: '<rect width="76" height="76" rx="18" fill="url(#g-blue)"/><g stroke="#fff" stroke-width="6" stroke-linecap="round"><path d="M34 17l24 42M42 17L23.500 48M15 47h28M54 47h7M21 53l-3 5.500"/></g>' },
    { run: 1, badge: 1, svg: '<rect width="76" height="76" rx="18" fill="url(#g-set)"/><circle cx="38" cy="38" r="31.500" fill="none" stroke="#2e2e2e" stroke-width="4" stroke-dasharray="2 1.300"/><circle cx="38" cy="38" r="30" fill="#3c3c3c"/><circle cx="38" cy="38" r="25" fill="none" stroke="#a9a9a9" stroke-width="4"/><circle cx="38" cy="38" r="21" fill="none" stroke="#8c8c8c" stroke-width="2" stroke-dasharray="2 1.500"/><path d="M38 38h24M38 38L26 17.500M38 38L26 58.500" stroke="#b5b5b5" stroke-width="4"/><circle cx="38" cy="38" r="5" fill="#b5b5b5"/><circle cx="38" cy="38" r="2" fill="#444"/>' },
    { run: 1, svg: '<path d="M1 8q0-5 5-5.500L51-1q4-.500 7 2l15 11q3 2.500 3 6v50q0 5-5 5.500L24 77q-5 .500-8-3L3 59q-2-3-2-6z" fill="#fff"/><path d="M5 10q0-3 3-3.500L51 3q3 0 5 1.500L70 15q2 1.500 2 4v47q0 3-3 3.500L24 73q-3 0-5-2L7 56q-2-2-2-4z" fill="#171717"/><path d="M10 10.500L50 7q2 0 3 1l10 7-40 3q-3 0-5-1.500z" fill="#fff"/><path d="M19 24q0-2 2-2.200L65 19q2 0 2 2v43q0 2-2 2.200L21 69q-2 0-2-2z" fill="#fff"/><text x="43" y="61" text-anchor="middle" font-size="46" font-weight="700" font-family="Liberation Serif" fill="#111">N</text>' },
    { run: 1, badge: 1, svg: '<use href="#a-discord"/>' },
  ];
  document.getElementById('dock').innerHTML = apps.map(a => `
    <div class="relative h-[98px] w-[76px]">
      <svg class="overflow-visible drop-shadow-[0_1px_2px_rgba(0,0,0,.3)]" width="76" height="76" viewBox="0 0 76 76">${a.svg}</svg>
      ${a.run ? '<span class="absolute left-[33px] top-[87px] h-2 w-2 rounded-full bg-[#120506]"></span>' : ''}
      ${a.badge ? `<span class="absolute left-[51px] -top-[9px] flex h-9 w-9 items-center justify-center rounded-full bg-[#e65245] text-[23px] text-white shadow-[0_0_2px_rgba(0,0,0,.5)]">${a.badge}</span>` : ''}
    </div>`).join('');

  const labels = [...document.querySelectorAll('.fit')];
  function track() {
    for (const el of labels) {
      el.style.cssText = 'display:inline-block;white-space:nowrap;flex-shrink:0;letter-spacing:0';
    }
    const widths = labels.map(el => el.getBoundingClientRect().width);
    labels.forEach((el, i) => {
      const n = [...el.textContent].length;
      el.style.letterSpacing = ((el.dataset.w - widths[i]) / n).toFixed(3) + 'px';
    });
  }
  track();
  addEventListener('load', track);
  document.fonts.ready.then(track);
  document.fonts.addEventListener('loadingdone', track);
  let frames = 0;
  (function settle() { track(); if (frames++ < 20) requestAnimationFrame(settle); })();
</script>
</body>
</html>
